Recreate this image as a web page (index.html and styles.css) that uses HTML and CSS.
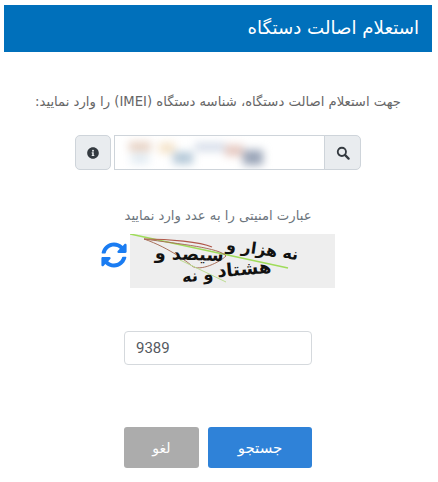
FILE: index.html
```html
<!DOCTYPE html>
<html lang="fa" dir="rtl">
<head>
<meta charset="utf-8">
<title>استعلام اصالت دستگاه</title>
<link rel="stylesheet" href="styles.css">
</head>
<body>
<div class="page">
  <header class="head"><h1>استعلام اصالت دستگاه</h1></header>
  <p class="intro">جهت استعلام اصالت دستگاه، شناسه دستگاه (IMEI) را وارد نمایید:</p>
  <div class="group" dir="ltr">
    <button class="addon info" type="button" aria-label="راهنما">
      <svg viewBox="0 0 512 512" width="12" height="12"><path fill="#343a40" d="M256 8C119 8 8 119 8 256s111 248 248 248 248-111 248-248S393 8 256 8zm0 110a42 42 0 1 1 0 84 42 42 0 0 1 0-84zm56 254c0 7-5 12-12 12h-88c-7 0-12-5-12-12v-24c0-7 5-12 12-12h12v-64h-12c-7 0-12-5-12-12v-24c0-7 5-12 12-12h64c7 0 12 5 12 12v100h12c7 0 12 5 12 12z"/></svg>
    </button>
    <div class="field">
      <div class="smear">
        <i class="s1"></i><i class="s2"></i><i class="s3"></i><i class="s4"></i><i class="s5"></i><i class="s6"></i><i class="s7"></i>
      </div>
    </div>
    <button class="addon search" type="button" aria-label="جستجو">
      <svg viewBox="0 0 16 16" width="14" height="14"><circle cx="6.7" cy="6.7" r="4.7" fill="none" stroke="#343a40" stroke-width="2.1"/><path d="M10.2 10.2l4.2 4.2" stroke="#343a40" stroke-width="2.6" stroke-linecap="round"/></svg>
    </button>
  </div>
  <p class="label">عبارت امنیتی را به عدد وارد نمایید</p>
  <div class="captcha-row" dir="ltr">
    <svg class="refresh" viewBox="0 0 512 512" width="26" height="26"><path fill="#1a7cf2" d="M370.7 133.300C339.500 104 298.900 88 255.800 88c-77.500.1-144.300 53.200-162.800 126.900-1.300 5.400-6.100 9.100-11.600 9.100H24.100c-7.500 0-13.200-6.800-11.800-14.200C33.900 94.900 134.800 8 256 8c66.400 0 126.800 26.100 171.300 68.700L463 41c15.100-15.100 41-4.400 41 17v134c0 13.300-10.700 24-24 24H346c-21.400 0-32.100-25.900-17-41l41.700-41.700zM32 296h134c21.400 0 32.100 25.900 17 41l-41.700 41.700c31.200 29.300 71.800 45.300 114.900 45.300 77.400-.1 144.300-53.100 162.800-126.800 1.300-5.400 6.100-9.100 11.600-9.100h57.300c7.500 0 13.200 6.800 11.800 14.200C478.100 417.100 377.200 504 256 504c-66.400 0-126.800-26.100-171.300-68.700L49 471c-15.100 15.100-41 4.400-41-17V320c0-13.300 10.700-24 24-24z"/></svg>
    <div class="captcha">
      <svg class="noise" viewBox="0 0 205 54" width="205" height="54">
        <path d="M0 0L158 34" stroke="#9fdc5a" stroke-width="1.600" fill="none"/>
        <path d="M14 5C40 5 70 8 82 13" stroke="#b0584a" stroke-width="1.200" fill="none"/>
        <path d="M14 5C40 14 60 30 62 32C70 38 90 28 96 22C90 14 50 10 14 5z" stroke="#a8705a" stroke-width="1" fill="none"/>
        <path d="M50 26L96 48" stroke="#bcdc90" stroke-width="1" fill="none"/>
      </svg>
      <span class="cw w1">نه هزار و</span>
      <span class="cw w2">سیصد و</span>
      <span class="cw w3">هشتاد</span>
      <span class="cw w4">و نه</span>
    </div>
  </div>
  <div class="code-row"><input class="code" dir="ltr" type="text" value="9389"></div>
  <div class="actions">
    <button class="btn primary" type="button">جستجو</button>
    <button class="btn muted" type="button">لغو</button>
  </div>
</div>
</body>
</html>
```
FILE: styles.css
```css
* { box-sizing: border-box; }
html, body { margin: 0; background: #fff; }
body { font-family: "DejaVu Sans", "Noto Sans", sans-serif; color: #6c757d; }
.page { width: 438px; height: 482px; padding: 5px 6px 0 4px; overflow: hidden; }
.head { height: 47px; background: #0070bb; display: flex; align-items: center; padding: 0 13px; }
.head h1 { margin: 0; font-size: 18.200px; font-weight: 400; color: #fff; line-height: 1; }
.intro { margin: 40px 0 0; height: 20px; line-height: 20px; font-size: 13.200px; text-align: center; color: #666; white-space: nowrap; }
.group { margin: 23px auto 0 71px; width: 286px; height: 35px; display: flex; }
.addon { width: 37px; height: 35px; padding: 0; background: #e9ecef; border: 1px solid #ced4da; display: flex; align-items: center; justify-content: center; }
.info { width: 36px; border-radius: 5px; margin-right: 3px; }
.search { border-radius: 0 5px 5px 0; margin-left: -1px; }
.field { flex: 1; border: 1px solid #ced4da; padding: 1px 0 0 10px; background: #fff; overflow: hidden; }
.smear { position: relative; width: 140px; height: 30px; filter: blur(4px); }
.smear i { position: absolute; display: block; }
.s1 { left: 4px; top: 5px; width: 22px; height: 9px; background: #e6cfc0; }
.s2 { left: 6px; top: 16px; width: 18px; height: 11px; background: #e3ecf3; }
.s3 { left: 34px; top: 6px; width: 16px; height: 10px; background: #f5e2c6; }
.s4 { left: 48px; top: 15px; width: 20px; height: 12px; background: #b4c8d8; }
.s5 { left: 70px; top: 6px; width: 30px; height: 8px; background: #d3dbe8; }
.s6 { left: 100px; top: 8px; width: 18px; height: 11px; background: #e6c8c0; }
.s7 { left: 118px; top: 13px; width: 20px; height: 15px; background: #9aa5b8; }
.label { margin: 36px 0 0; height: 19px; line-height: 19px; font-size: 13.200px; text-align: center; color: #6c757d; white-space: nowrap; }
.captcha-row { margin: 9px auto 0 97px; width: 234px; display: flex; align-items: flex-start; gap: 3px; height: 54px; }
.refresh { margin-top: 8px; flex: none; }
.captcha { position: relative; width: 205px; height: 54px; background: #eee; overflow: hidden; flex: none; }
.noise { position: absolute; left: 0; top: 0; }
.cw { position: absolute; line-height: 1.300; font-weight: 700; color: #111; white-space: nowrap; direction: rtl; }
.w1 { right: 36px; top: 6px; transform: rotate(8deg); font-size: 16px; }
.w2 { left: 25px; top: 9px; transform: rotate(2deg); font-size: 17.500px; }
.w3 { left: 87px; top: 23px; transform: rotate(-5deg); font-size: 18px; }
.w4 { left: 52px; top: 32px; transform: rotate(-6deg); font-size: 16px; }
.code-row { margin: 43px auto 0 120px; width: 188px; }
.code { display: block; width: 188px; height: 34px; padding: 0 11px; border: 1px solid #d5d9dd; border-radius: 4px; font-family: Roboto, "Liberation Sans", sans-serif; font-size: 15px; color: #55595f; background: #fff; outline: none; }
.actions { margin: 62px auto 0 120px; display: flex; width: 188px; gap: 9px; }
.btn { height: 41px; border: 0; border-radius: 3px; color: #fff; font-family: "DejaVu Sans", sans-serif; font-size: 15px; padding: 0; }
.primary { width: 104px; background: #2f82d8; }
.muted { width: 75px; background: #acacac; font-size: 14px; }
```
